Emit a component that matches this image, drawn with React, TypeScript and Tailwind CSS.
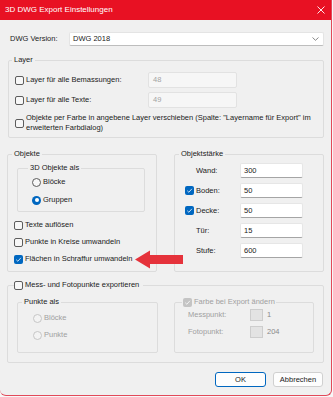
import React from "react";

const FONT = { fontFamily: '"Liberation Sans", Arial, sans-serif' };

function Check({ checked = false, disabled = false }: { checked?: boolean; disabled?: boolean }) {
  if (checked) {
    return (
      <span
        className={`inline-flex w-[9px] h-[9px] shrink-0 rounded-[2px] items-center justify-center ${
          disabled ? "bg-[#c4c4c4]" : "bg-[#0067c0]"
        }`}
      >
        <svg width="7" height="7" viewBox="0 0 10 10">
          <path d="M1.8 5.3 L4.1 7.5 L8.4 2.6" fill="none" stroke="white" strokeWidth="1.1" />
        </svg>
      </span>
    );
  }
  return (
    <span
      className={`inline-block w-[9px] h-[9px] shrink-0 rounded-[2px] border ${
        disabled ? "border-[#c2c2c2] bg-[#f5f5f5]" : "border-[#5c5c5c] bg-[#f7f7f7]"
      }`}
    />
  );
}

function Radio({ checked = false, disabled = false }: { checked?: boolean; disabled?: boolean }) {
  if (checked) {
    return (
      <span className="inline-flex w-[9px] h-[9px] shrink-0 rounded-full bg-[#0067c0] items-center justify-center">
        <span className="w-[4px] h-[4px] rounded-full bg-white" />
      </span>
    );
  }
  return (
    <span
      className={`inline-block w-[9px] h-[9px] shrink-0 rounded-full border ${
        disabled ? "border-[#c6c6c6] bg-[#f3f3f3]" : "border-[#5c5c5c] bg-[#f7f7f7]"
      }`}
    />
  );
}

function NumInput({ value }: { value: string }) {
  return (
    <div className="w-[63px] h-[15px] bg-white border border-[#e6e6e6] border-b-[#a5a5a5] rounded-[2px] flex items-center pl-[3px] text-[#1b1b1b]">
      {value}
    </div>
  );
}

export default function App() {
  return (
    <div className="w-[333px] h-[397px] bg-[#f7f7f7] relative text-[7.5px] leading-[12px] text-[#1b1b1b]" style={FONT}>
      <div className="w-[332px] h-[396px] bg-[#f0f0f0] border-r border-b border-[#e2495a] rounded-br-[6px] rounded-bl-[6px] flex flex-col">
        {/* Title bar */}
        <div className="h-[20px] bg-[#e81123] flex items-center justify-between pl-[5px] pr-[6px] shrink-0">
          <span className="text-white text-[8px] leading-[12px]">3D DWG Export Einstellungen</span>
          <svg width="8" height="8" viewBox="0 0 8 8">
            <path d="M0.5 0.5 L7.5 7.5 M7.5 0.5 L0.5 7.5" stroke="white" strokeWidth="0.9" />
          </svg>
        </div>

        <div className="px-[7px] flex flex-col">
          {/* DWG Version */}
          <div className="mt-[12px] h-[14px] flex items-center">
            <span className="pl-[3px] w-[62px]">DWG Version:</span>
            <div className="w-[255px] h-[14px] bg-white border border-[#e4e4e4] border-b-[#bdbdbd] rounded-[2px] flex items-center justify-between pl-[3px] pr-[4px]">
              <span>DWG 2018</span>
              <svg width="7" height="4" viewBox="0 0 7 4">
                <path d="M0.5 0.5 L3.5 3.3 L6.5 0.5" fill="none" stroke="#6b6b6b" strokeWidth="0.8" />
              </svg>
            </div>
          </div>

          {/* Layer */}
          <fieldset className="mt-[8px] ml-[1px] w-[316px] border border-[#dcdcdc] rounded-[2px] p-0 pb-[4px]">
            <legend className="ml-[3px] px-[2px] h-[12px]">Layer</legend>
            <div className="flex flex-col pt-[6px] pl-[6px]">
              <div className="h-[16px] flex items-center">
                <Check />
                <span className="ml-[2px] w-[122px]">Layer für alle Bemassungen:</span>
                <div className="w-[89px] h-[16px] bg-[#f6f6f6] border border-[#e2e2e2] rounded-[2px] flex items-center pl-[4px] text-[#a3a3a3]">
                  48
                </div>
              </div>
              <div className="h-[16px] mt-[4px] flex items-center">
                <Check />
                <span className="ml-[2px] w-[122px]">Layer für alle Texte:</span>
                <div className="w-[89px] h-[16px] bg-[#f6f6f6] border border-[#e2e2e2] rounded-[2px] flex items-center pl-[4px] text-[#a3a3a3]">
                  49
                </div>
              </div>
              <div className="mt-[5px] flex items-center">
                <Check />
                <span className="ml-[2px] leading-[10px] whitespace-nowrap">
                  Objekte per Farbe in angebene Layer verschieben (Spalte: "Layername für Export" im
                  <br />
                  erweiterten Farbdialog)
                </span>
              </div>
            </div>
          </fieldset>

          {/* Objekte + Objektstärke */}
          <div className="mt-[10px] flex gap-[17px] relative">
            <fieldset className="w-[150px] border border-[#dcdcdc] rounded-[2px] p-0 pb-[6px]">
              <legend className="ml-[4px] px-[2px] h-[12px]">Objekte</legend>
              <div className="flex flex-col pt-[2px] pl-[9px] pr-[11px]">
                <fieldset className="w-[128px] border border-[#dcdcdc] rounded-[2px] p-0 pb-[5px]">
                  <legend className="ml-[10px] px-[2px] h-[12px]">3D Objekte als</legend>
                  <div className="flex flex-col pt-[2px] pl-[14px]">
                    <div className="h-[12px] flex items-center">
                      <Radio />
                      <span className="ml-[2px]">Blöcke</span>
                    </div>
                    <div className="h-[12px] mt-[6px] flex items-center">
                      <Radio checked />
                      <span className="ml-[2px]">Gruppen</span>
                    </div>
                  </div>
                </fieldset>
                <div className="flex flex-col mt-[7px] -ml-[3px]">
                  <div className="h-[12px] flex items-center">
                    <Check />
                    <span className="ml-[2px]">Texte auflösen</span>
                  </div>
                  <div className="h-[12px] mt-[5px] flex items-center">
                    <Check />
                    <span className="ml-[2px]">Punkte in Kreise umwandeln</span>
                  </div>
                  <div className="h-[12px] mt-[5px] flex items-center">
                    <Check checked />
                    <span className="ml-[2px] whitespace-nowrap">Flächen in Schraffur umwandeln</span>
                  </div>
                </div>
              </div>
            </fieldset>

            <fieldset className="w-[150px] border border-[#dcdcdc] rounded-[2px] p-0">
              <legend className="ml-[4px] px-[2px] h-[12px]">Objektstärke</legend>
              <div className="flex flex-col pt-[3px] pl-[10px] gap-[5px]">
                <div className="h-[15px] flex items-center">
                  <span className="w-[11px]" />
                  <span className="w-[44px]">Wand:</span>
                  <NumInput value="300" />
                </div>
                <div className="h-[15px] flex items-center">
                  <span className="w-[11px] flex">
                    <Check checked />
                  </span>
                  <span className="w-[44px]">Boden:</span>
                  <NumInput value="50" />
                </div>
                <div className="h-[15px] flex items-center">
                  <span className="w-[11px] flex">
                    <Check checked />
                  </span>
                  <span className="w-[44px]">Decke:</span>
                  <NumInput value="50" />
                </div>
                <div className="h-[15px] flex items-center">
                  <span className="w-[11px]" />
                  <span className="w-[44px]">Tür:</span>
                  <NumInput value="15" />
                </div>
                <div className="h-[15px] flex items-center">
                  <span className="w-[11px]" />
                  <span className="w-[44px]">Stufe:</span>
                  <NumInput value="600" />
                </div>
              </div>
            </fieldset>

            {/* red arrow annotation */}
            <svg
              className="absolute left-[128px] top-[102px]"
              width="49"
              height="19"
              viewBox="0 0 49 19"
            >
              <path d="M0 9.5 L15 0.5 L15 5 L48 5 L48 14 L15 14 L15 18.5 Z" fill="#e5323b" />
            </svg>
          </div>

          {/* Mess- und Fotopunkte */}
          <fieldset className="mt-[7px] w-[317px] border border-[#dcdcdc] rounded-[2px] p-0 pb-[9px]">
            <legend className="ml-[6px] pr-[4px] h-[12px] flex items-center">
              <Check />
              <span className="ml-[2px]">Mess- und Fotopunkte exportieren</span>
            </legend>
            <div className="flex pt-[5px] pl-[9px] gap-[16px]">
              <fieldset className="w-[141px] border border-[#dcdcdc] rounded-[2px] p-0 pb-[11px]">
                <legend className="ml-[4px] px-[2px] h-[12px]">Punkte als</legend>
                <div className="flex flex-col pt-[4px] pl-[15px] text-[#a0a0a0]">
                  <div className="h-[12px] flex items-center">
                    <Radio disabled />
                    <span className="ml-[2px]">Blöcke</span>
                  </div>
                  <div className="h-[12px] mt-[5px] flex items-center">
                    <Radio disabled />
                    <span className="ml-[2px]">Punkte</span>
                  </div>
                </div>
              </fieldset>
              <fieldset className="w-[140px] border border-[#dcdcdc] rounded-[2px] p-0">
                <legend className="ml-[7px] px-[1px] h-[12px] flex items-center text-[#a0a0a0]">
                  <Check checked disabled />
                  <span className="ml-[2px]">Farbe bei Export ändern</span>
                </legend>
                <div className="flex flex-col pt-[1px] pl-[13px] text-[#a0a0a0]">
                  <div className="h-[12px] flex items-center">
                    <span className="w-[62px]">Messpunkt:</span>
                    <span className="w-[13px] h-[12px] bg-[#e3e3e3] border border-[#cdcdcd]" />
                    <span className="ml-[4px] text-[#8a8a8a]">1</span>
                  </div>
                  <div className="h-[12px] mt-[5px] flex items-center">
                    <span className="w-[62px]">Fotopunkt:</span>
                    <span className="w-[13px] h-[12px] bg-[#e3e3e3] border border-[#cdcdcd]" />
                    <span className="ml-[4px] text-[#8a8a8a]">204</span>
                  </div>
                </div>
              </fieldset>
            </div>
          </fieldset>

          {/* Buttons */}
          <div className="mt-[9px] flex justify-end gap-[7px] pr-[1px]">
            <div className="w-[51px] h-[15px] bg-[#fdfdfd] border border-[#0067c0] rounded-[3px] flex items-center justify-center">
              OK
            </div>
            <div className="w-[50px] h-[15px] bg-[#fdfdfd] border border-[#d0d0d0] rounded-[3px] flex items-center justify-center">
              Abbrechen
            </div>
          </div>
        </div>
      </div>
    </div>
  );
}
